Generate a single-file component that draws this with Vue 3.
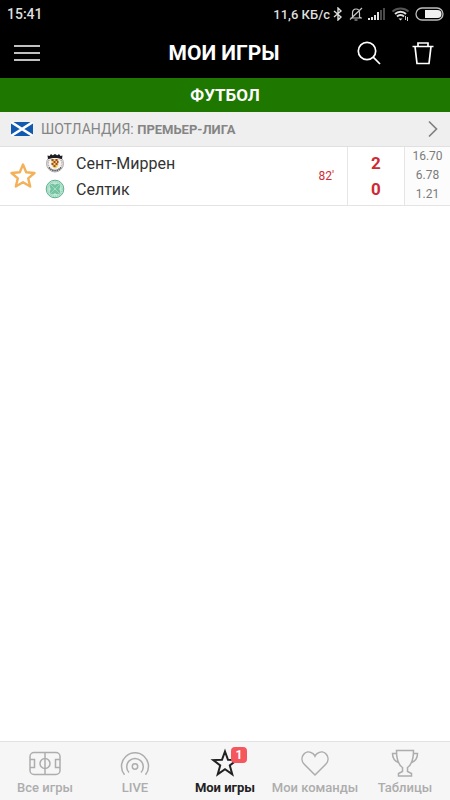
<script setup>
import { ref } from 'vue'

const favourite = ref(true)
const match = {
  home: 'Сент-Миррен',
  away: 'Селтик',
  minute: "82'",
  score: [2, 0],
  odds: ['16.70', '6.78', '1.21'],
}
const tabs = [
  { id: 'all', label: 'Все игры' },
  { id: 'live', label: 'LIVE' },
  { id: 'mine', label: 'Мои игры', badge: 1 },
  { id: 'teams', label: 'Мои команды' },
  { id: 'tables', label: 'Таблицы' },
]
const active = ref('mine')
</script>

<template>
  <div class="screen">
    <div class="status">
      <span class="clock">15:41</span>
      <span class="speed">11,6 КБ/с</span>
      <svg class="bt" width="10" height="14" viewBox="0 0 10 14" fill="none" stroke="#dcdcdc" stroke-width="1.4" aria-hidden="true">
        <path d="M1 4l7 6-3 3V1l3 3-7 6" />
      </svg>
      <svg class="bell" width="14" height="14" viewBox="0 0 14 14" fill="none" stroke="#c8c8c8" stroke-width="1.2" aria-hidden="true">
        <path d="M1.500 11h11.500M3.500 10V6c0-2.500 1.500-4 3.500-4s3.500 1.500 3.500 4v4l1.500 1M5.500 13h3M13 1L1 12.500" />
      </svg>
      <svg class="signal" width="17" height="12" viewBox="0 0 17 12" aria-hidden="true">
        <path fill="#e2e2e2" d="M0 10h2v2H0zM3 9h2v3H3zM6 7h2v5H6zM9 4h2v8H9z" />
        <path fill="#4a4a4a" d="M12 2h2v10h-2zM15 0h2v12h-2z" />
      </svg>
      <svg class="wifi" width="18" height="14" viewBox="0 0 18 14" fill="none" stroke-width="1.800" aria-hidden="true">
        <path stroke="#555" d="M.500 4.500C5 .500 12 .500 16.500 4.500" />
        <path stroke="#e2e2e2" d="M3 7c3-3 8-3 11 0M5 9.500c2-2 5-2 7 0" />
        <path fill="#e2e2e2" d="M6.500 11.500h4l-2 2z" />
        <path stroke="#ccc" stroke-width="1" d="M13.500 9v4M15.500 10v4" />
      </svg>
      <svg width="29" height="14" viewBox="0 0 29 14" aria-hidden="true">
        <rect x="1" y="1" width="27" height="12" rx="6" fill="none" stroke="#bdbdbd" stroke-width="1.300" />
        <path fill="#f2f2f2" d="M10 3h12.500a4 4 0 0 1 0 8H10z" />
      </svg>
    </div>

    <header class="topbar">
      <button class="icon-button menu" type="button" aria-label="Меню">
        <svg width="26" height="18" viewBox="0 0 26 18" stroke="#fff" stroke-width="1.700" aria-hidden="true">
          <path d="M0 2h26M0 9h26M0 16h26" />
        </svg>
      </button>
      <h1>МОИ ИГРЫ</h1>
      <div class="actions">
        <button class="icon-button" type="button" aria-label="Поиск">
          <svg width="24" height="24" viewBox="0 0 24 24" fill="none" stroke="#fff" stroke-width="1.700" aria-hidden="true">
            <circle cx="10" cy="10" r="8.700" />
            <path d="M16.200 16.200L23 23" />
          </svg>
        </button>
        <button class="icon-button" type="button" aria-label="Удалить">
          <svg width="22" height="24" viewBox="0 0 22 24" fill="none" stroke="#fff" stroke-width="1.700" aria-hidden="true">
            <path d="M.500 5.500h21M3 5.500L5 22.500h12l2-17M6 5V2h10v3" />
          </svg>
        </button>
      </div>
    </header>

    <main>
      <h2 class="sport">ФУТБОЛ</h2>
      <a class="league" href="#league">
        <svg width="22" height="14" viewBox="0 0 22 14" aria-hidden="true">
          <path fill="#1259b0" d="M0 0h22v14H0z" />
          <path stroke="#fff" stroke-width="2.600" d="M0 0l22 14M22 0L0 14" />
        </svg>
        <span class="league-name">ШОТЛАНДИЯ: <b>ПРЕМЬЕР-ЛИГА</b></span>
        <svg width="10" height="18" viewBox="0 0 10 18" fill="none" stroke="#808080" stroke-width="1.700" aria-hidden="true">
          <path d="M1 1.500L8.500 9 1 16.500" />
        </svg>
      </a>

      <article class="match">
        <button class="favourite" type="button" aria-label="Избранное" :aria-pressed="favourite" @click="favourite = !favourite">
          <svg width="28" height="28" viewBox="0 0 28 28" :fill="favourite ? '#fff' : 'none'" stroke="#f3b159" stroke-width="2.400" stroke-linejoin="round" aria-hidden="true">
            <path d="M14 2.500l3.200 7.800 8.300.700-6.300 5.400 2 8.100L14 20.200l-7.200 4.300 2-8.100L2.500 11l8.300-.700z" />
          </svg>
        </button>
        <div class="teams">
          <div class="team">
            <svg width="20" height="20" viewBox="0 0 20 20" aria-hidden="true">
              <circle cx="10" cy="10.500" r="8.500" fill="#f5f4f2" stroke="#9a9794" stroke-width=".800" />
              <circle cx="10" cy="10.500" r="7" fill="none" stroke="#a9a6a3" stroke-width="1.600" stroke-dasharray="1 .900" />
              <path fill="#1f1d24" d="M2.500 2.500l2 .500L6 1l1.800 1.500L10 1l2.200 1.500L14 1l1.500 2 2-.500-.500 3.500c-4-1.500-10-1.500-14 0z" />
              <path fill="#e9d34f" d="M6.500 6h7v4.500c0 2.500-1.500 4-3.500 5-2-1-3.500-2.500-3.500-5z" />
              <path fill="#a04447" d="M6.500 6h2v2h-2zM10.500 6h2v2h-2zM8.500 8h2v2h-2zM12 8h1.500v2H12zM6.500 10h2v2h-2zM10.500 10h2v2h-2zM8.500 12h2v2h-2z" />
              <path fill="none" stroke="#4c4a55" d="M4 14.500c3 4 9 4 12 0" stroke-width="1.500" stroke-dasharray="1.300 .800" />
            </svg>
            <span>{{ match.home }}</span>
          </div>
          <div class="team">
            <svg width="20" height="20" viewBox="0 0 20 20" fill="none" aria-hidden="true">
              <circle cx="10" cy="10" r="8.800" fill="#c3e8d8" stroke="#5cb38f" />
              <circle cx="10" cy="10" r="7.200" stroke="#8fcfb2" stroke-width="1.200" stroke-dasharray="1.200 .800" />
              <g fill="#73c3a1">
                <circle cx="7.500" cy="7.500" r="2.700" />
                <circle cx="12.500" cy="7.500" r="2.700" />
                <circle cx="7.500" cy="12.500" r="2.700" />
                <circle cx="12.500" cy="12.500" r="2.700" />
              </g>
              <path stroke="#a9dcc6" stroke-width=".800" d="M6 6l8 8M14 6l-8 8" />
            </svg>
            <span>{{ match.away }}</span>
          </div>
        </div>
        <span class="minute">{{ match.minute }}</span>
        <div class="score">
          <b v-for="(goals, i) in match.score" :key="i">{{ goals }}</b>
        </div>
        <div class="odds">
          <span v-for="odd in match.odds" :key="odd">{{ odd }}</span>
        </div>
      </article>
    </main>

    <nav class="tabs">
      <a
        v-for="tab in tabs"
        :key="tab.id"
        class="tab"
        :class="{ active: tab.id === active }"
        :href="'#' + tab.id"
        @click="active = tab.id"
      >
        <span class="tab-icon">
          <svg v-if="tab.id === 'all'" width="34" height="30" viewBox="0 0 34 30" aria-hidden="true">
            <rect x="2" y="4.500" width="30" height="22" rx="4" />
            <circle cx="17" cy="15.500" r="5" />
            <path d="M17 4.500v22M2 11.500h4.500v8H2M32 11.500h-4.500v8H32" />
          </svg>
          <svg v-else-if="tab.id === 'live'" width="34" height="30" viewBox="0 0 34 30" aria-hidden="true">
            <circle cx="17" cy="18.500" r="2.700" />
            <path d="M11 24.500a8.300 8.300 0 1 1 12 0M6.500 26.800a13.500 13.500 0 1 1 21 0" />
          </svg>
          <svg v-else-if="tab.id === 'mine'" width="34" height="30" viewBox="0 0 34 30" aria-hidden="true">
            <path d="M17 3.500l3 8.300 8.700.300-6.900 5.300 2.500 9-7.300-5.100-7.300 5.100 2.500-9-6.900-5.300 8.700-.300z" />
          </svg>
          <svg v-else-if="tab.id === 'teams'" width="34" height="30" viewBox="0 0 34 30" aria-hidden="true">
            <path d="M17 27L6.500 16.500C0 10 7.500 0 15 5.700c.800.600 1.500 1.500 2 2.500.500-1 1.200-1.900 2-2.500C26.500 0 34 10 27.500 16.500z" />
          </svg>
          <svg v-else width="34" height="30" viewBox="0 0 34 30" aria-hidden="true">
            <path d="M8.500 2.500h17c0 9-1.500 14-6 17v4l4 2V28h-13v-2.500l4-2v-4C10 16.500 8.500 11.500 8.500 2.500zM9 5.500H4.500c0 5 2 7.500 6 9M25 5.500h4.500c0 5-2 7.500-6 9" />
          </svg>
          <span v-if="tab.badge" class="badge">{{ tab.badge }}</span>
        </span>
        <span>{{ tab.label }}</span>
      </a>
    </nav>
  </div>
</template>

<style>
body {
  background: #fff;
}
</style>

<style scoped>
.screen {
  display: flex;
  flex-direction: column;
  min-height: 100vh;
  font-family: Roboto, "Liberation Sans", sans-serif;
  color: #333;
}

button {
  padding: 0;
  border: 0;
  background: none;
  cursor: pointer;
}

a {
  color: inherit;
  text-decoration: none;
}

svg {
  display: block;
  flex: none;
}

.status {
  display: flex;
  align-items: center;
  height: 28px;
  padding: 0 6px 0 7px;
  background: #000;
  color: #dedede;
  font-size: 14px;
  font-weight: 500;
}

.clock {
  flex: 1;
}

.speed {
  font-size: 13px;
}

.bt {
  margin: 0 6px 0 3px;
}

.bell {
  margin-right: 5px;
}

.signal {
  margin-right: 7px;
}

.wifi {
  margin-right: 5px;
}

.topbar {
  display: grid;
  grid-template-columns: 1fr auto 1fr;
  align-items: center;
  height: 50px;
  padding: 0 16px 0 14px;
  background: #000;
  color: #fff;
}

.menu {
  justify-self: start;
}

h1 {
  margin: 0;
  font-size: 21px;
  font-weight: 700;
  line-height: 28px;
}

.actions {
  display: flex;
  justify-content: flex-end;
  gap: 31px;
}

.sport {
  margin: 0;
  background: #1e7800;
  color: #fff;
  font-size: 17px;
  font-weight: 700;
  line-height: 34px;
  text-align: center;
}

.league {
  display: flex;
  align-items: center;
  gap: 8px;
  height: 34px;
  padding: 0 12px 0 11px;
  border-bottom: 1px solid #e0e0e0;
  background: #efefef;
  color: #858585;
  font-size: 14px;
}

.league-name {
  flex: 1;
}

.league-name b {
  font-size: 13px;
  font-weight: 700;
}

.match {
  display: flex;
  align-items: stretch;
  height: 58px;
  border-bottom: 1px solid #e4e4e4;
}

.favourite {
  display: grid;
  place-items: center;
  width: 45px;
}

.teams {
  display: flex;
  flex: 1;
  flex-direction: column;
  justify-content: center;
}

.team {
  display: flex;
  align-items: center;
  gap: 11px;
  height: 26px;
  font-size: 16px;
}

.minute {
  align-self: center;
  padding-right: 13px;
  color: #cf2a33;
  font-size: 12px;
}

.score {
  display: flex;
  flex-direction: column;
  justify-content: center;
  width: 56px;
  border-left: 1px solid #e6e6e6;
  color: #cf2a33;
  font-size: 17px;
  line-height: 26px;
  text-align: center;
}

.odds {
  display: flex;
  flex-direction: column;
  width: 45px;
  border-left: 1px solid #e6e6e6;
  background: #fcfcfc;
  color: #7b7b7b;
  font-size: 12px;
  line-height: 19px;
  text-align: center;
}

main {
  flex: 1;
}

.tabs {
  display: grid;
  grid-template-columns: repeat(5, 1fr);
  height: 58px;
  border-top: 1px solid #e2e2e2;
  background: #f6f6f6;
}

.tab {
  display: flex;
  flex-direction: column;
  align-items: center;
  padding-top: 6px;
  color: #adadad;
  font-size: 13px;
  font-weight: 500;
  line-height: 20px;
  white-space: nowrap;
}

.tab.active {
  color: #222;
  font-weight: 700;
}

.tab-icon {
  position: relative;
}

.tab-icon svg {
  fill: none;
  stroke: currentColor;
  stroke-width: 1.5px;
}

.tab.active .tab-icon svg {
  stroke-width: 2px;
}

.badge {
  position: absolute;
  top: -1px;
  right: -5px;
  width: 16px;
  border-radius: 4px;
  background: #f4585e;
  color: #fff;
  font-size: 12px;
  font-weight: 700;
  line-height: 16px;
  text-align: center;
}
</style>
